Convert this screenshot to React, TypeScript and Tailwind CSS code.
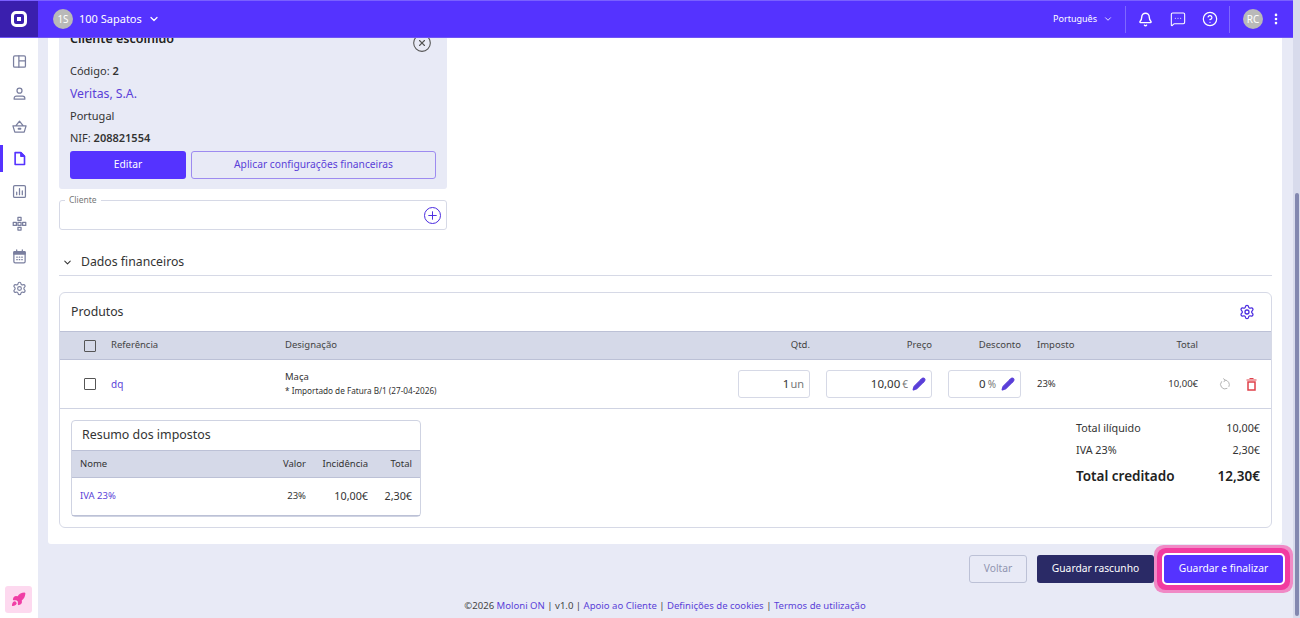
import React from "react";
import { Bell, ChevronDown, CircleHelp, CircleX, EllipsisVertical, MessageSquareMore, Pencil, Plus, Settings, Rocket } from "lucide-react";

function Field({ children, w }: { children: React.ReactNode; w: string }) {
  return (
    <div className={`${w} h-[28px] rounded-[3px] border border-[#d6d9e6] bg-white flex items-center justify-end pr-[5px] gap-[2px] text-[11.5px] text-[#333]`}>
      {children}
    </div>
  );
}

function Ico({ children, active }: { children: React.ReactNode; active?: boolean }) {
  return (
    <div className={`relative w-full h-[32.5px] flex items-center justify-center ${active ? "text-[#5533ff]" : "text-[#7a7f9f]"}`}>
      {active && <div className="absolute left-0 top-[2px] w-[3px] h-[27px] bg-[#5533ff]" />}
      <svg width="15" height="15" viewBox="0 0 24 24" fill="none" stroke="currentColor" strokeWidth="2" strokeLinejoin="round" strokeLinecap="round">
        {children}
      </svg>
    </div>
  );
}

export default function App() {
  return (
    <div className="h-[618px] w-[1300px] flex overflow-hidden bg-[#e8eaf6] text-[#333] font-['Noto_Sans',sans-serif]">
      <div className="w-[1293px] flex flex-col">
        <header className="relative z-10 h-[38px] shrink-0 flex items-center bg-[#5533ff] text-white border-y border-t-[#7a60ff] border-b-[#6f55f5]">
          <div className="w-[38px] h-full bg-[#3a1fae] flex items-center justify-center">
            <div className="w-[16px] h-[16px] rounded-[5px] border-[3.5px] border-white flex items-center justify-center">
              <div className="w-[3.5px] h-[3.5px] bg-white" />
            </div>
          </div>
          <div className="ml-[15px] w-[20px] h-[20px] rounded-full bg-[#b9b9b9] text-[10px] flex items-center justify-center">1S</div>
          <span className="ml-[6px] text-[11px]">100 Sapatos</span>
          <ChevronDown size={12} strokeWidth={2.5} className="ml-[6px]" />
          <span className="ml-auto text-[9px]">Português</span>
          <ChevronDown size={10} strokeWidth={2} className="ml-[6px]" />
          <div className="ml-[12px] w-px h-[27px] bg-[#7f68ff]" />
          <Bell size={15} strokeWidth={2.2} className="ml-[12px]" />
          <MessageSquareMore size={16} strokeWidth={1.6} className="ml-[17px]" />
          <CircleHelp size={16} strokeWidth={1.8} className="ml-[16px]" />
          <div className="ml-[11px] w-px h-[27px] bg-[#7f68ff]" />
          <div className="ml-[13px] w-[20px] h-[20px] rounded-full bg-[#b9b9b9] text-[10px] flex items-center justify-center">RC</div>
          <EllipsisVertical size={14} strokeWidth={2.5} className="ml-[6px] mr-[10px]" />
        </header>
        <div className="flex flex-1 min-h-0">
          <aside className="w-[38px] shrink-0 bg-white flex flex-col items-center pt-[7px] pb-[5px]">
            <Ico><rect x="2.5" y="3" width="19" height="18" rx="2" /><path d="M11 3v18M11 11h10.5" /></Ico>
            <Ico><circle cx="12" cy="7.5" r="4" /><path d="M3.5 21v-1.5a3.5 3.5 0 0 1 3.5-3.5h10a3.5 3.5 0 0 1 3.5 3.5V21z" /></Ico>
            <Ico><path d="M1.5 11h21l-3 10h-15zM6 11l6-7.5 6 7.5" /><path d="M10.5 15.5h3" strokeWidth="3" /></Ico>
            <Ico active><path d="M5 2.5h9l6 6v13H5z" strokeWidth="2.6" /><path d="M14 2.5l6 6h-6z" fill="currentColor" /></Ico>
            <Ico><rect x="2.5" y="2.5" width="19" height="19" rx="2" /><path d="M7.5 17v-4M12 17V7.5M16.5 17v-6" /></Ico>
            <Ico><rect x="9.5" y="2" width="5" height="5" /><rect x="2" y="10" width="5" height="5" /><rect x="9.5" y="10" width="5" height="5" /><rect x="17" y="10" width="5" height="5" /><rect x="9.5" y="18" width="5" height="4.5" /></Ico>
            <Ico><rect x="3" y="4" width="18" height="18" rx="2" /><path d="M3 8h18V5a1 1 0 0 0-1-1H4a1 1 0 0 0-1 1z" fill="currentColor" /><path d="M7.5 1.5V4M16.5 1.5V4" /><path d="M7.5 13h1M11.5 13h1M15.5 13h1M7.5 17h1M11.5 17h1M15.5 17h1" strokeWidth="1.8" /></Ico>
            <div className="w-full h-[32.5px] flex items-center justify-center text-[#7a7f9f]"><Settings size={15} strokeWidth={1.8} /></div>
            <div className="mt-auto mr-[1px] w-[27px] h-[27px] rounded-[3px] bg-[#fdd9ef] flex items-center justify-center text-[#f03ea5]">
              <Rocket size={15} fill="currentColor" />
            </div>
          </aside>
          <main className="flex-1 flex flex-col min-w-0 pl-[10px] pr-[11px]">
            <div className="bg-white rounded-b-[3px] h-[506px] pl-[11px] pr-[10px] shrink-0 overflow-hidden">
              <div className="-mt-[14px] h-[165px] w-[388px] bg-[#e8eaf6] rounded-[3px] px-[11px] relative">
                <div className="text-[12.5px] font-semibold leading-[20px] pt-[4px] h-[24px] text-[#222] translate-y-[1px] whitespace-nowrap">Cliente escolhido</div>
                <CircleX size={20} strokeWidth={1.3} className="absolute right-[15px] top-[9px] text-[#555]" />
                <div className="mt-[15px] text-[11px] leading-[16px] h-[16px]">Código: <b className="font-semibold">2</b></div>
                <div className="mt-[6px] text-[12.25px] leading-[18px] h-[18px] text-[#5a3fd8]">Veritas, S.A.</div>
                <div className="mt-[5px] text-[11px] leading-[16px] h-[16px]">Portugal</div>
                <div className="mt-[6px] text-[11px] leading-[16px] h-[16px]">NIF: <b className="font-semibold">208821554</b></div>
                <div className="mt-[5px] flex gap-[5px]">
                  <button className="w-[116px] h-[28px] rounded-[3px] bg-[#5533ff] text-white text-[10.25px]">Editar</button>
                  <button className="w-[245px] h-[28px] rounded-[3px] border border-[#9d8bf0] text-[#5a3fd8] text-[10.25px]">Aplicar configurações financeiras</button>
                </div>
              </div>
              <div className="relative mt-[11px] w-[388px] h-[30px] rounded-[3px] border border-[#d6d9e6] flex items-center justify-end pr-[5px]">
                <span className="absolute left-[5px] -top-[6px] bg-white px-[4px] text-[8.5px] leading-[10px] text-[#777]">Cliente</span>
                <div className="w-[17px] h-[17px] rounded-full border-[1.5px] border-[#4a2be0] flex items-center justify-center text-[#4a2be0]">
                  <Plus size={13} strokeWidth={1.8} />
                </div>
              </div>
              <div className="mt-[20px] h-[26px] flex items-center border-b border-[#d6d9e6] pb-[1px]">
                <ChevronDown size={11} strokeWidth={2.2} className="ml-[3px]" />
                <span className="ml-[8px] text-[12.25px]">Dados financeiros</span>
              </div>
              <section className="mt-[16px] h-[236px] rounded-[6px] border border-[#d6d9e6] flex flex-col">
                <div className="h-[38px] flex items-center justify-between px-[11px]">
                  <span className="text-[12.25px]">Produtos</span>
                  <Settings size={16} strokeWidth={1.9} className="text-[#4a2be0] mr-[5px]" />
                </div>
                <div className="h-[29px] bg-[#d5d9e8] border-y border-[#bcc1d6] flex items-center text-[9.5px] text-[#444]">
                  <div className="ml-[24px] w-[12px] h-[12px] border border-[#555] rounded-[1px]" />
                  <span className="ml-[15px] w-[174px]">Referência</span>
                  <span className="w-[300px]">Designação</span>
                  <span className="w-[225px] text-right">Qtd.</span>
                  <span className="w-[122px] text-right">Preço</span>
                  <span className="w-[89px] text-right">Desconto</span>
                  <span className="ml-[16px] w-[60px]">Imposto</span>
                  <span className="w-[101px] text-right">Total</span>
                </div>
                <div className="h-[49px] border-b border-[#cfd3e2] flex items-center text-[9.5px]">
                  <div className="ml-[24px] w-[12px] h-[12px] border border-[#555] rounded-[1px]" />
                  <span className="ml-[15px] w-[174px] text-[#5a3fd8] text-[10px]">dq</span>
                  <div className="w-[300px] leading-[14px]">
                    <div className="text-[9.5px]">Maça</div>
                    <div className="text-[8.2px]">* Importado de Fatura B/1 (27-04-2026)</div>
                  </div>
                  <div className="w-[225px] flex justify-end">
                    <Field w="w-[72px]">1<span className="-ml-[1px] text-[#777] text-[11px]">un</span></Field>
                  </div>
                  <div className="w-[122px] flex justify-end">
                    <Field w="w-[106px]">10,00<span className="text-[#777] text-[10px]">€</span><Pencil size={14} fill="currentColor" className="ml-[2px] text-[#5a3fd8]" /></Field>
                  </div>
                  <div className="w-[89px] flex justify-end">
                    <Field w="w-[73px]">0<span className="text-[#777] text-[10px]">%</span><Pencil size={14} fill="currentColor" className="ml-[3px] text-[#5a3fd8]" /></Field>
                  </div>
                  <span className="ml-[16px] w-[60px]">23%</span>
                  <span className="w-[101px] text-right">10,00€</span>
                  <svg width="12" height="13" viewBox="0 0 24 26" fill="none" stroke="#b4b4b4" strokeWidth="2" strokeLinecap="round" strokeLinejoin="round" className="ml-[21px]">
                    <path d="M12 4a9 9 0 0 1 8 13" />
                    <path d="M16 21a9 9 0 0 1-11-13.7" />
                    <path d="M9 1.5L12.5 4 10 7.5" />
                  </svg>
                  <svg width="11" height="13" viewBox="0 0 22 26" fill="none" stroke="#e0404a" strokeWidth="3" className="ml-[15px]">
                    <path d="M4 8h14v16H4z" />
                    <path d="M1 4h20M7 1h8" strokeWidth="2.4" />
                  </svg>
                </div>
                <div className="flex-1 flex px-[11px] pt-[11px]">
                  <div className="w-[350px] h-[97px] shrink-0 rounded-[4px] border border-[#cfd3e2] flex flex-col">
                    <div className="h-[29px] pl-[10px] flex items-center text-[12.4px]">Resumo dos impostos</div>
                    <div className="h-[28px] bg-[#d5d9e8] border-y border-[#bcc1d6] flex items-center text-[9.5px] px-[8px]">
                      <span className="flex-1">Nome</span>
                      <span className="w-[30px] text-right">Valor</span>
                      <span className="w-[62px] text-right">Incidência</span>
                      <span className="w-[44px] text-right">Total</span>
                    </div>
                    <div className="flex-1 flex items-center text-[9.5px] px-[8px] border-b border-[#bcc1d6]">
                      <span className="flex-1 text-[#5a3fd8]">IVA 23%</span>
                      <span className="w-[30px] text-right">23%</span>
                      <span className="w-[62px] text-right text-[10.75px]">10,00€</span>
                      <span className="w-[44px] text-right text-[10.75px]">2,30€</span>
                    </div>
                  </div>
                  <div className="ml-auto w-[184px] text-[10.75px]">
                    <div className="flex justify-between h-[16px] items-center"><span>Total ilíquido</span><span>10,00€</span></div>
                    <div className="flex justify-between h-[16px] items-center mt-[6px]"><span>IVA 23%</span><span>2,30€</span></div>
                    <div className="flex justify-between h-[20px] items-center mt-[8px] text-[13.5px] font-semibold text-[#222]"><span>Total creditado</span><span>12,30€</span></div>
                  </div>
                </div>
              </section>
            </div>
            <div className="mt-[11px] h-[28px] flex justify-end items-center gap-[10px] -mr-px text-[10.25px]">
              <button className="w-[58px] h-[28px] rounded-[3px] border border-[#bcc1d6] text-[#9095b0]">Voltar</button>
              <button className="w-[117px] h-[28px] rounded-[3px] bg-[#2a2a66] text-white">Guardar rascunho</button>
              <button className="relative z-10 w-[119px] h-[28px] rounded-[3px] bg-[#5533ff] text-white outline outline-[2px] outline-white shadow-[0_0_0_7px_#f23ba0,0_0_0_10px_#f08ac6]">Guardar e finalizar</button>
            </div>
            <div className="mt-[16px] text-center text-[9.55px] text-[#444] leading-[14px]">
              ©2026 <span className="text-[#5a3fd8]">Moloni ON</span> | v1.0 | <span className="text-[#5a3fd8]">Apoio ao Cliente</span> | <span className="text-[#5a3fd8]">Definições de cookies</span> | <span className="text-[#5a3fd8]">Termos de utilização</span>
            </div>
          </main>
        </div>
      </div>
      <div className="w-[7px] h-full bg-[#d8dbec] flex flex-col justify-end pb-[2px]">
        <div className="ml-[2px] w-[4px] h-[423px] rounded-[2px] bg-[#8388b0]" />
      </div>
    </div>
  );
}
